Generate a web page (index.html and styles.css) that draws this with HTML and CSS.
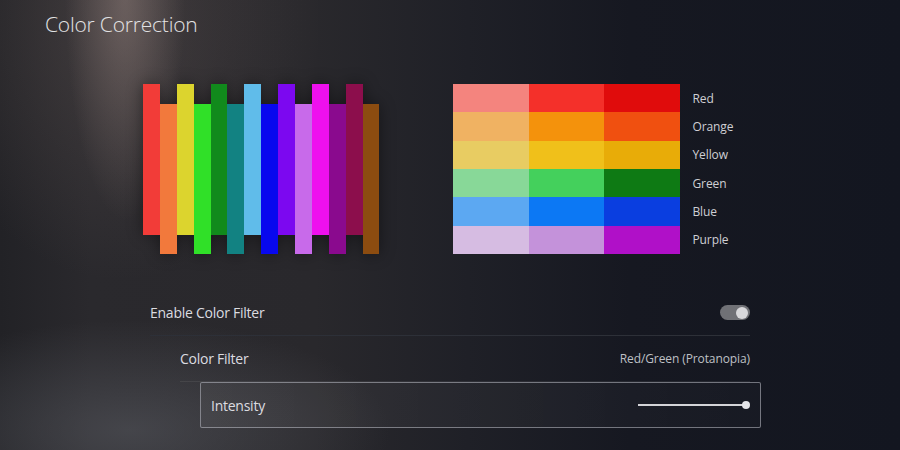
FILE: index.html
```html
<!DOCTYPE html>
<html>
<head>
<meta charset="utf-8">
<link rel="stylesheet" href="styles.css">
</head>
<body>
<div class="screen">
  <h1 class="title">Color Correction</h1>
  <div class="samples">
    <div class="bars">
      <div class="bar up" style="background:#f23c38"></div>
      <div class="bar down" style="background:#f2793c"></div>
      <div class="bar up" style="background:#dcd42e"></div>
      <div class="bar down" style="background:#30e028"></div>
      <div class="bar up" style="background:#118a1c"></div>
      <div class="bar down" style="background:#128282"></div>
      <div class="bar up" style="background:#60bcea"></div>
      <div class="bar down" style="background:#0808ee"></div>
      <div class="bar up" style="background:#7c08f0"></div>
      <div class="bar down" style="background:#c86aea"></div>
      <div class="bar up" style="background:#ee10ee"></div>
      <div class="bar down" style="background:#8a0a8e"></div>
      <div class="bar up" style="background:#8c0e4c"></div>
      <div class="bar down" style="background:#8c4c10"></div>
    </div>
    <div class="chart">
      <div class="grid">
        <div style="background:#f4847e"></div><div style="background:#f4302a"></div><div style="background:#e00c0c"></div>
        <div style="background:#f0b262"></div><div style="background:#f4920c"></div><div style="background:#f05010"></div>
        <div style="background:#e8cc62"></div><div style="background:#f0c01a"></div><div style="background:#e8ac08"></div>
        <div style="background:#88d898"></div><div style="background:#44d05c"></div><div style="background:#0e7a14"></div>
        <div style="background:#5ca8f2"></div><div style="background:#0c78f4"></div><div style="background:#0a3ee0"></div>
        <div style="background:#d6bce2"></div><div style="background:#c492da"></div><div style="background:#b010c8"></div>
      </div>
      <ul class="labels">
        <li>Red</li><li>Orange</li><li>Yellow</li><li>Green</li><li>Blue</li><li>Purple</li>
      </ul>
    </div>
  </div>
  <div class="settings">
    <div class="row sep">
      <span class="label">Enable Color Filter</span>
      <span class="toggle"><span class="knob"></span></span>
    </div>
    <div class="row sub">
      <span class="label">Color Filter</span>
      <span class="value">Red/Green (Protanopia)</span>
    </div>
    <div class="row focus">
      <span class="label">Intensity</span>
      <span class="slider"><span class="track"></span><span class="thumb"></span></span>
    </div>
  </div>
</div>
</body>
</html>
```
FILE: styles.css
```css
* { box-sizing: border-box; }
html, body { margin: 0; padding: 0; }
body {
  width: 900px;
  height: 450px;
  overflow: hidden;
  font-family: "Open Sans", "Noto Sans", sans-serif;
  color: #e6e6e8;
  background-color: #161821;
  background-image:
    radial-gradient(ellipse 60px 230px at 125px -10px, rgba(160,140,135,0.45), rgba(160,140,135,0) 100%),
    radial-gradient(ellipse 200px 260px at 120px 20px, rgba(100,88,86,0.4), rgba(100,88,86,0) 100%),
    radial-gradient(ellipse 260px 110px at 130px 430px, rgba(95,97,104,0.5), rgba(95,97,104,0) 100%),
    linear-gradient(90deg, #222226 0%, #2a292d 10%, #29282c 35%, #1f2027 52%, #161821 70%, #131620 100%);
}
.screen {
  width: 900px;
  height: 450px;
  display: flex;
  flex-direction: column;
}
.title {
  margin: 10px 0 0 45px;
  font-size: 21px;
  line-height: 28px;
  font-weight: 300;
  color: #e2e2e4;
  letter-spacing: -0.2px;
}
.samples {
  margin-top: 46px;
  display: flex;
  align-items: flex-start;
  height: 170px;
}
.bars {
  margin-left: 143px;
  display: flex;
  align-items: flex-start;
  height: 170px;
  filter: drop-shadow(0 0 8px rgba(0,0,0,0.45));
}
.bar {
  width: 16.9px;
}
.bar.up { height: 151px; }
.bar.down { height: 150px; margin-top: 20px; }
.chart {
  margin-left: 74px;
  display: flex;
  align-items: stretch;
  height: 170px;
}
.grid {
  width: 227px;
  height: 170px;
  display: grid;
  grid-template-columns: 76px 75px 76px;
  grid-template-rows: repeat(6, 1fr);
}
.labels {
  list-style: none;
  margin: 0 0 0 12px;
  padding: 0;
  display: grid;
  grid-template-rows: repeat(6, 1fr);
  font-size: 12px;
  color: #cfcfd4;
  letter-spacing: -0.1px;
}
.labels li {
  display: flex;
  align-items: center;
}
.settings {
  margin: 36px 0 0 150px;
  width: 600px;
  display: flex;
  flex-direction: column;
}
.row {
  height: 46px;
  display: flex;
  align-items: center;
  justify-content: space-between;
}
.label {
  font-size: 14px;
  color: #dcdce0;
  letter-spacing: -0.25px;
}
.row.sep {
  border-bottom: 1px solid #2d3038;
}
.row.sub {
  margin-left: 30px;
  border-bottom: 1px solid rgba(255,255,255,0.07);
}
.value {
  font-size: 12px;
  color: #bfc0c5;
  letter-spacing: -0.1px;
}
.row.focus {
  margin-left: 50px;
  margin-right: -11px;
  padding: 0 10px 0 10px;
  border: 1px solid rgba(190,192,200,0.55);
  border-radius: 2px;
  background: linear-gradient(90deg, rgba(255,255,255,0.05), rgba(255,255,255,0.015));
}
.toggle {
  width: 30px;
  height: 15px;
  border-radius: 8px;
  background: #707176;
  display: flex;
  align-items: center;
  justify-content: flex-end;
  padding-right: 2px;
}
.knob {
  width: 12px;
  height: 12px;
  border-radius: 50%;
  background: #d8d8db;
}
.slider {
  width: 112px;
  height: 10px;
  display: flex;
  align-items: center;
}
.track {
  flex: 1;
  height: 2px;
  background: #d4d4d8;
}
.thumb {
  width: 8px;
  height: 8px;
  border-radius: 50%;
  background: #e4e4e8;
  margin-left: -2px;
}
```
